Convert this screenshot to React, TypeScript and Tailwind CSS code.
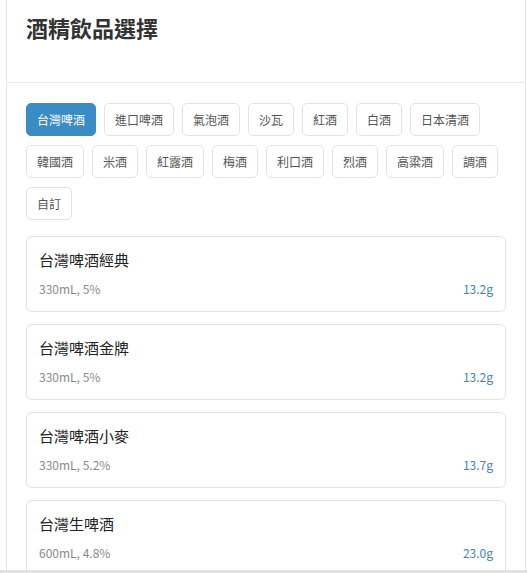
import { useState } from "react";

const categories = [
  "台灣啤酒",
  "進口啤酒",
  "氣泡酒",
  "沙瓦",
  "紅酒",
  "白酒",
  "日本清酒",
  "韓國酒",
  "米酒",
  "紅露酒",
  "梅酒",
  "利口酒",
  "烈酒",
  "高粱酒",
  "調酒",
  "自訂",
];

const drinks = [
  { name: "台灣啤酒經典", spec: "330mL, 5%", grams: "13.2g" },
  { name: "台灣啤酒金牌", spec: "330mL, 5%", grams: "13.2g" },
  { name: "台灣啤酒小麥", spec: "330mL, 5.2%", grams: "13.7g" },
  { name: "台灣生啤酒", spec: "600mL, 4.8%", grams: "23.0g" },
];

const App = () => {
  const [active, setActive] = useState("台灣啤酒");

  return (
    <div
      className="flex h-[573px] flex-col overflow-hidden bg-white"
      style={{ fontFamily: '"Noto Sans CJK TC", "Noto Sans", sans-serif' }}
    >
      <div className="ml-[6px] mr-[1px] flex min-h-0 flex-1 flex-col overflow-hidden border-x border-[#e6e6e6]">
        {/* header */}
        <div className="h-[83px] shrink-0 border-b border-[#e8e8e8] px-[19px] pt-[11px]">
          <h1 className="text-[22px] leading-[32px] font-bold text-[#333]">
            酒精飲品選擇
          </h1>
        </div>

        <div className="px-[19px] pt-5">
          {/* categories */}
          <div className="flex flex-wrap gap-x-2 gap-y-[9px]">
            {categories.map((c) => (
              <button
                key={c}
                onClick={() => setActive(c)}
                className={`h-[33px] rounded-[5px] border px-[10px] text-[12px] leading-none ${
                  active === c
                    ? "border-[#3a8cc4] bg-[#3a8cc4] text-white"
                    : "border-[#e3e3e3] bg-white text-[#555]"
                }`}
              >
                {c}
              </button>
            ))}
          </div>

          {/* drink list */}
          <div className="mt-[16px] flex flex-col gap-3">
            {drinks.map((d) => (
              <div
                key={d.name}
                className="h-[76px] shrink-0 rounded-[6px] border border-[#e3e3e3] px-3 pt-[12px]"
              >
                <p className="text-[15px] leading-[22px] font-normal text-[#222]">
                  {d.name}
                </p>
                <div className="mt-[9px] flex items-center justify-between text-[12px] leading-[18px]">
                  <span className="text-[#8a8a8a]">{d.spec}</span>
                  <span className="text-[#3a87b8]">{d.grams}</span>
                </div>
              </div>
            ))}
          </div>
        </div>
      </div>
      <div className="h-[3px] shrink-0 bg-[#e2e2e2]" />
    </div>
  );
};

export default App;
